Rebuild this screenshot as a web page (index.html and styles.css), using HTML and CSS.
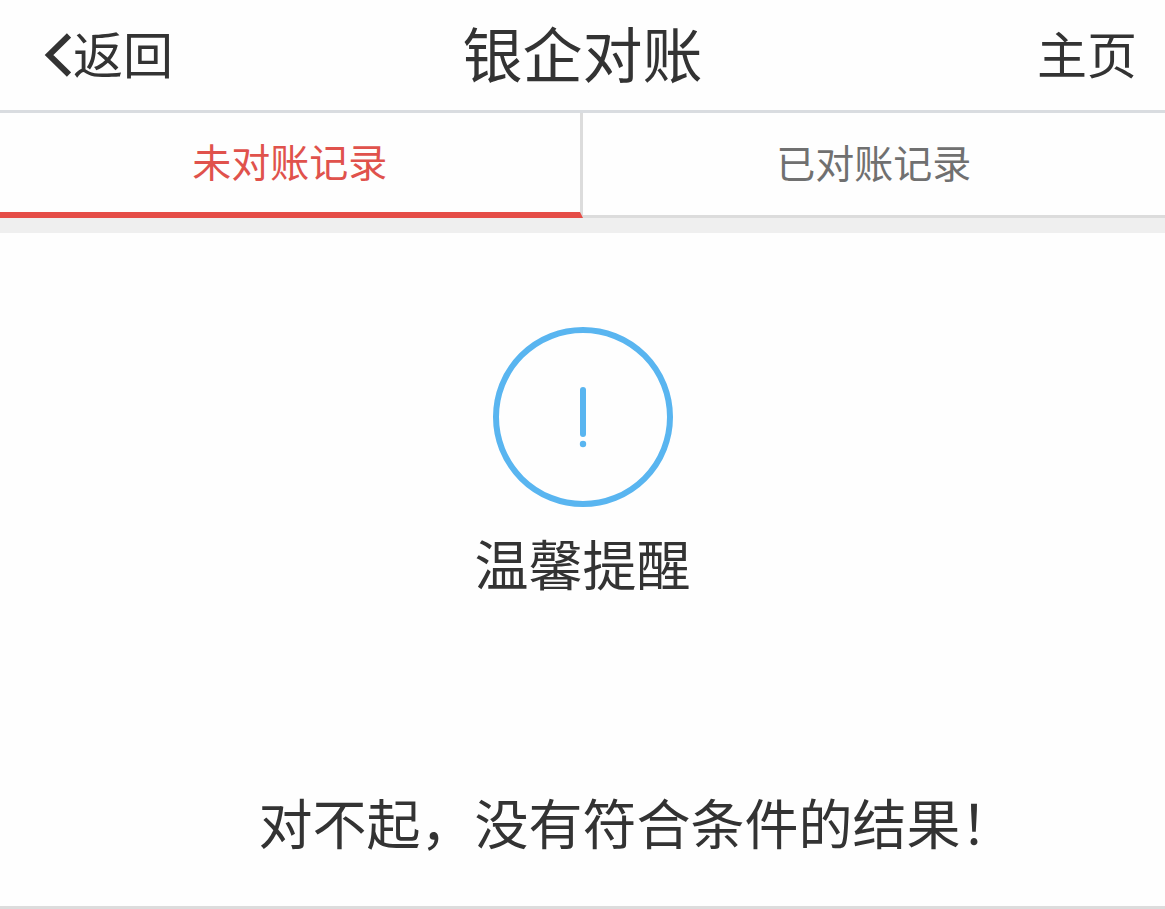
FILE: index.html
```html
<!DOCTYPE html>
<html lang="zh-CN">
<head>
<meta charset="utf-8">
<meta name="viewport" content="width=device-width, initial-scale=1">
<title>银企对账</title>
<link rel="stylesheet" href="styles.css">
</head>
<body>
<header class="topbar">
  <a class="back" href="#back">
    <svg class="back-icon" viewBox="0 0 28 50" aria-hidden="true"><path d="M26 8.500 6 28 26 47.500"/></svg>返回</a>
  <h1 class="title">银企对账</h1>
  <a class="home" href="#home">主页</a>
</header>
<nav class="tabs">
  <button class="tab tab-active" type="button">未对账记录</button>
  <button class="tab" type="button">已对账记录</button>
</nav>
<main class="notice">
  <svg class="notice-icon" viewBox="0 0 180 180" aria-hidden="true">
    <circle class="ring" cx="90" cy="90" r="87"/>
    <path class="stem" d="M90 63V107"/>
    <circle class="dot" cx="90" cy="117" r="3.2"/>
  </svg>
  <h2 class="notice-title">温馨提醒</h2>
  <p class="notice-text">对不起，没有符合条件的结果！</p>
</main>
</body>
</html>
```
FILE: styles.css
```css
* {
  box-sizing: border-box;
}

body {
  margin: 0;
  background: #fefefe;
  color: #333;
  font-family: "Noto Sans CJK SC", sans-serif;
}

h1,
h2,
p {
  margin: 0;
  font-weight: 400;
}

a {
  color: inherit;
  text-decoration: none;
}

.topbar {
  display: grid;
  grid-template-columns: 1fr auto 1fr;
  align-items: center;
  padding: 0 28px 6px;
  border-bottom: 3px solid #d9dce0;
  line-height: 104px;
}

.back,
.home {
  font-size: 50px;
}

.back {
  display: flex;
  align-items: center;
  gap: 2px;
  padding-left: 15px;
}

.back-icon {
  width: 28px;
  height: 50px;
  fill: none;
  stroke: #333;
  stroke-width: 6;
}

.title {
  font-size: 60px;
}

.home {
  text-align: right;
}

.tabs {
  display: grid;
  grid-template-columns: 1fr 1fr;
  border-bottom: 15px solid #efefef;
}

.tab {
  height: 105px;
  padding: 0 0 6px;
  border: 0 solid #dcdcdc;
  border-bottom-width: 3px;
  background: transparent;
  color: #707070;
  font-family: inherit;
  font-size: 39px;
}

.tab-active {
  border-right-width: 3px;
  border-bottom: 6px solid #e54d47;
  color: #e0524c;
}

.notice {
  display: flex;
  flex-direction: column;
  align-items: center;
  padding: 94px 0 44px;
  border-bottom: 3px solid #dcdcdc;
  font-size: 54px;
  line-height: 80px;
}

.notice-icon {
  width: 180px;
  height: 180px;
  fill: none;
  stroke: #59b5f0;
  stroke-width: 6;
  stroke-linecap: round;
}

.dot {
  fill: #59b5f0;
  stroke: none;
}

.notice-title {
  margin-top: 16px;
  font-size: 54px;
}

.notice-text {
  margin-top: 179px;
  text-indent: 2em;
}
```
